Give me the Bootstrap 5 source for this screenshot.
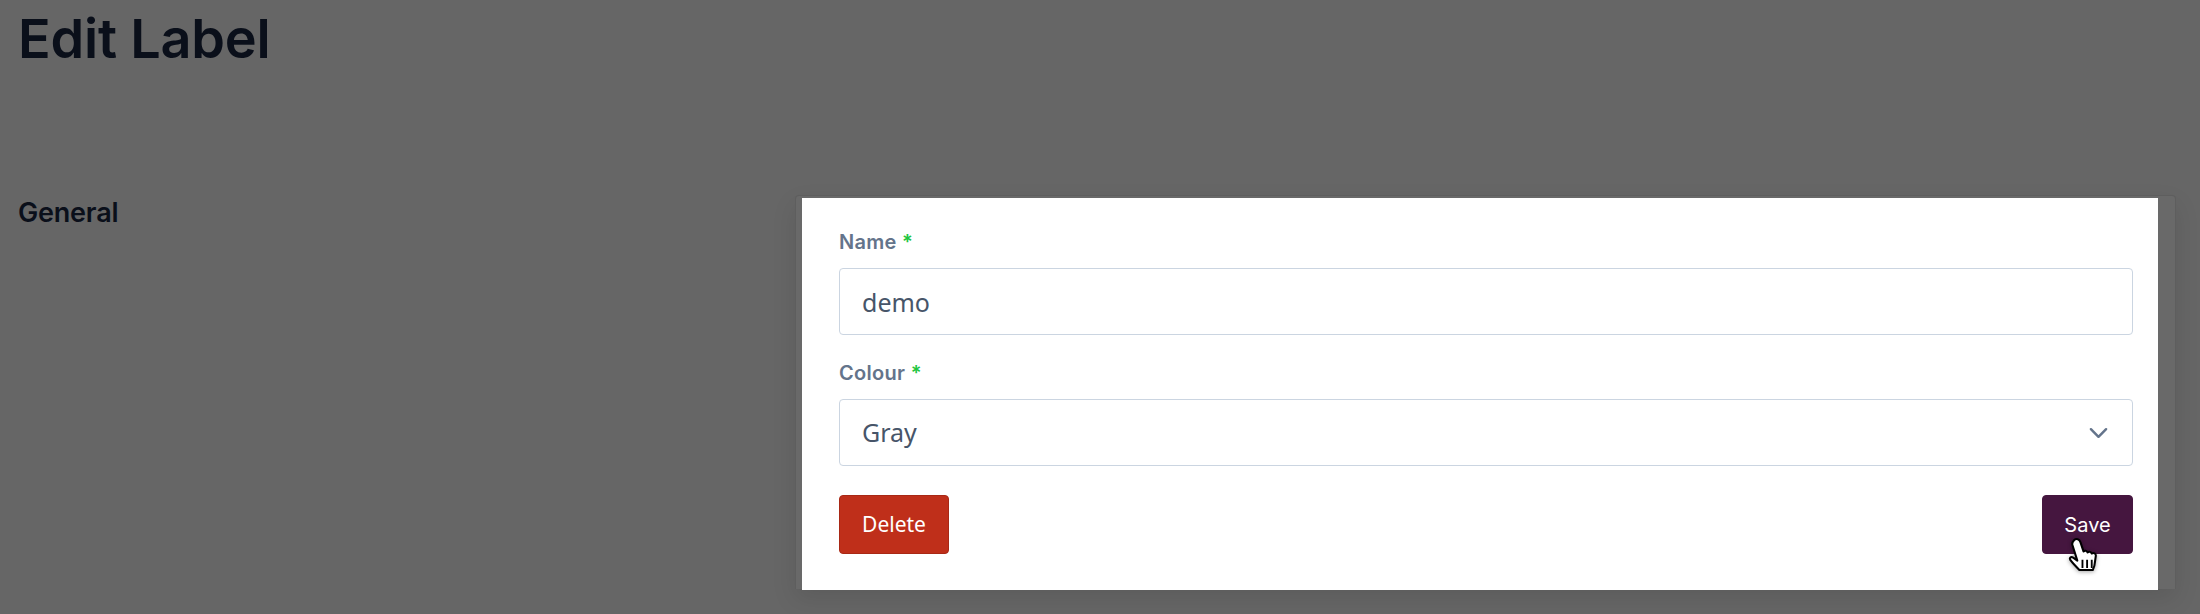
<!doctype html>
<html lang="en">
<head>
<meta charset="utf-8">
<title>Edit Label</title>
<link href="https://cdn.jsdelivr.net/npm/bootstrap@5.3.0/dist/css/bootstrap.min.css" rel="stylesheet">
<style>
html,body{height:614px;overflow:hidden}
body{background:#666;font-family:"Inter",sans-serif;color:#0e1420;padding:0 24px 0 18px}
.page-title{font-size:54px;font-weight:600;line-height:56px;margin:11px 0 0;letter-spacing:-.2px;color:#0a0f1a}
.form-area{margin-top:128px}
.side-col{width:777px;flex:none}
.side-title{font-size:27px;font-weight:600;line-height:30px;margin:0;padding-top:3px;letter-spacing:-.2px;color:#0a0f1a}
.back-card{width:1381px;flex:none;background:#696969;border:1px solid #5e5e5e;border-bottom:0;border-radius:4px 4px 0 0;height:394px;padding:2px 17px 0 6px;box-shadow:0 10px 24px rgba(0,0,0,.1)}
.spot-panel{background:#fff;height:392px;padding:31px 25px 0 37px;position:relative}
.field-label{font-size:20px;font-weight:600;color:#64748b;line-height:26px;margin:0 0 13px;display:block;letter-spacing:.3px}
.req{color:#22c53e}
.field-input.form-control,.field-input.form-select{height:67px;border:1px solid #cbd5e1;border-radius:4px;padding:0 22px;font-size:25px;color:#475569;font-family:"Noto Sans",sans-serif;box-shadow:none}
.field-input.form-select{background-image:url("data:image/svg+xml,%3Csvg xmlns='http://www.w3.org/2000/svg' viewBox='0 0 20 12'%3E%3Cpath d='M2 2l8 8 8-8' fill='none' stroke='%2364748b' stroke-width='2.6' stroke-linecap='round' stroke-linejoin='round'/%3E%3C/svg%3E");background-size:19px 12px;background-position:right 24px center}
.field-gap{margin-bottom:25px}
.act-row{margin-top:29px}
.btn-del,.btn-save{height:59px;border-radius:4px;color:#fff;font-weight:400;padding:0;display:flex;align-items:center;justify-content:center}
.btn-del{width:110px;font-size:21px;background:#bf2f1a;border:1px solid #a82815;font-family:"Noto Sans",sans-serif}
.btn-save{width:91px;font-size:20px;background:#45163f;border:1px solid #45163f}
.btn-del:hover{background:#bf2f1a;color:#fff}.btn-save:hover{background:#45163f;color:#fff}
.hand-cursor{position:absolute;left:1265px;top:339px;width:33px;height:35px;filter:drop-shadow(0 1px 2px rgba(0,0,0,.35))}
</style>
</head>
<body>
<h1 class="page-title">Edit Label</h1>
<div class="d-flex form-area">
  <div class="side-col"><h2 class="side-title">General</h2></div>
  <div class="back-card">
    <div class="spot-panel">
      <div class="field-gap">
        <label class="field-label" for="f1">Name <span class="req">*</span></label>
        <input id="f1" class="form-control field-input" value="demo">
      </div>
      <div>
        <label class="field-label" for="f2">Colour <span class="req">*</span></label>
        <select id="f2" class="form-select field-input"><option>Gray</option></select>
      </div>
      <div class="d-flex justify-content-between act-row">
        <button type="button" class="btn btn-del">Delete</button>
        <button type="button" class="btn btn-save">Save</button>
      </div>
      <svg class="hand-cursor" viewBox="0 0 32 34" aria-hidden="true">
        <path d="M7 3c2-2 5-1 6 2l3 9c1-1 3-1 4 1 1-1 3-1 4 1 2-1 4 0 4 2l-1 7c0 3-1 5-2 7H12c-3-3-7-7-9-10-1-2 1-3 3-2l4 3L5 7c0-2 1-3 2-4z" fill="#fff" stroke="#000" stroke-width="2" stroke-linejoin="round"/>
        <path d="M15 22v8M19.500 22v8M24 22v8" stroke="#000" stroke-width="1.800" fill="none"/>
      </svg>
    </div>
  </div>
</div>
<script src="https://cdn.jsdelivr.net/npm/bootstrap@5.3.0/dist/js/bootstrap.bundle.min.js"></script>
</body>
</html>
